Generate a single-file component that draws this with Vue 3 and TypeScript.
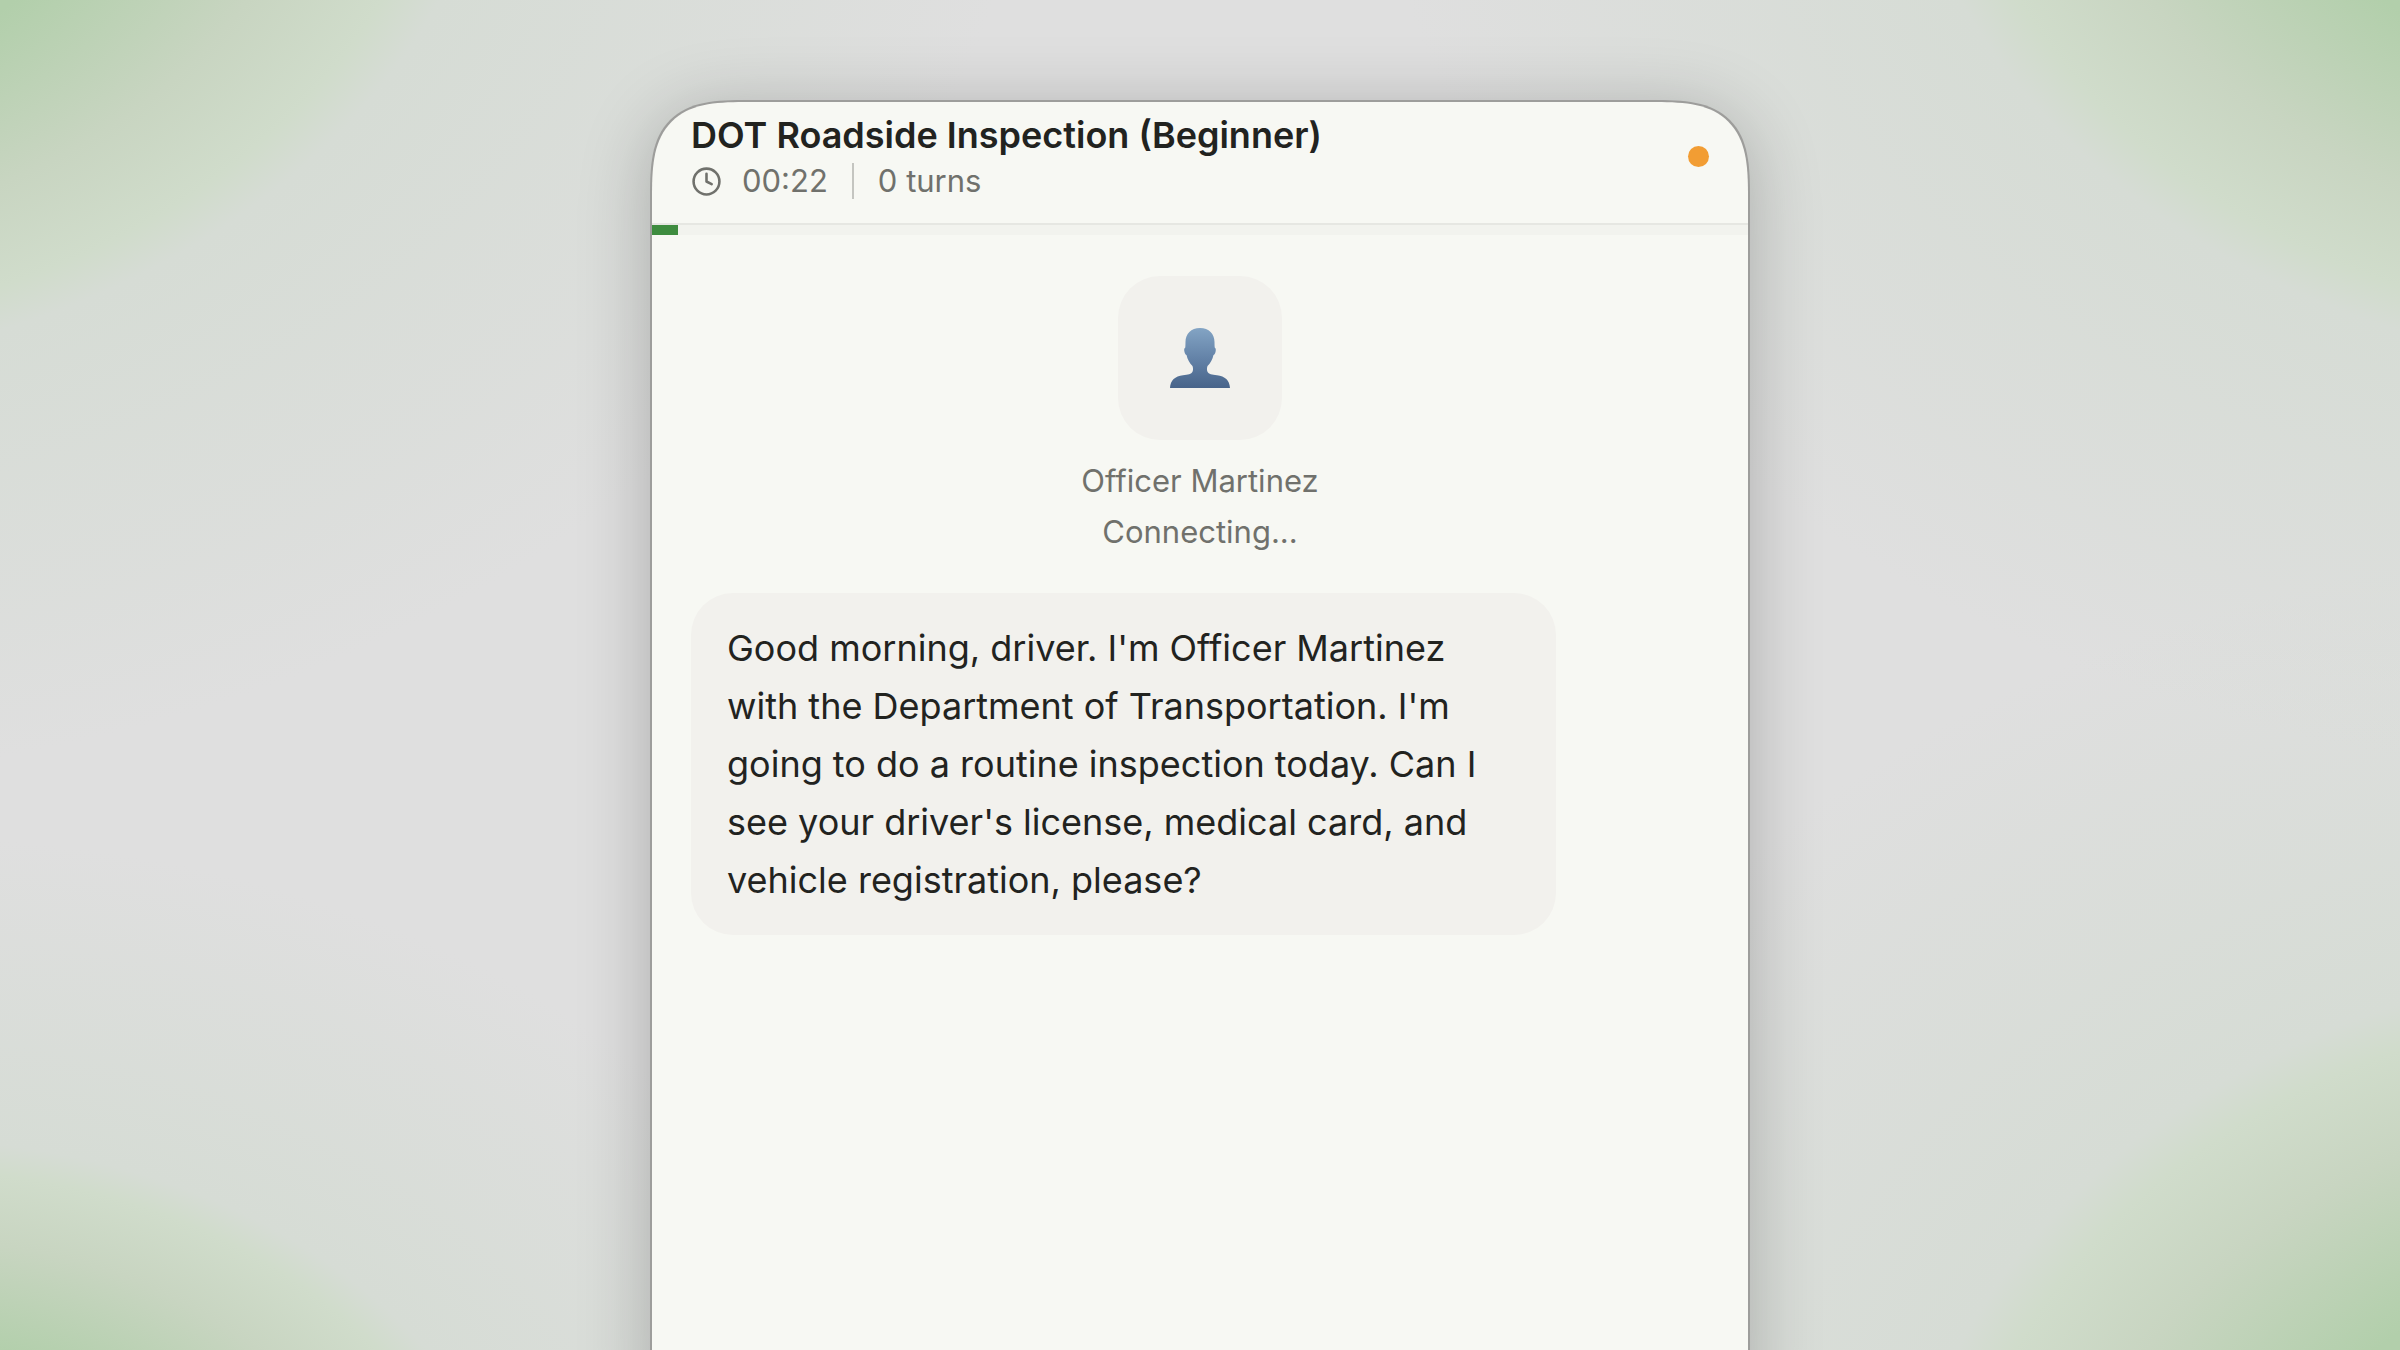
<script setup lang="ts">
import { computed, ref } from 'vue'

interface Message {
  id: number
  text: string
}

const title = 'DOT Roadside Inspection (Beginner)'
const officer = 'Officer Martinez'
const status = 'Connecting...'

const elapsedSeconds = ref(22)
const totalSeconds = 920
const turns = ref(0)

const messages = ref<Message[]>([
  {
    id: 1,
    text: "Good morning, driver. I'm Officer Martinez with the Department of Transportation. I'm going to do a routine inspection today. Can I see your driver's license, medical card, and vehicle registration, please?",
  },
])

const clock = computed(() => {
  const minutes = Math.floor(elapsedSeconds.value / 60)
  const seconds = elapsedSeconds.value % 60
  return `${String(minutes).padStart(2, '0')}:${String(seconds).padStart(2, '0')}`
})

const progress = computed(() => `${(elapsedSeconds.value / totalSeconds) * 100}%`)
</script>

<template>
  <div class="page">
    <main class="panel">
      <header class="header">
        <div class="heading">
          <h1 class="title">{{ title }}</h1>
          <div class="meta">
            <svg class="clock" viewBox="0 0 24 24" aria-hidden="true">
              <circle cx="12" cy="12" r="10" />
              <path d="M12 6v6l4 2" />
            </svg>
            <time class="elapsed">{{ clock }}</time>
            <span class="divider"></span>
            <span>{{ turns }} turns</span>
          </div>
        </div>
        <span class="dot" role="status" aria-label="Connecting"></span>
      </header>

      <div class="track">
        <div class="bar" :style="{ width: progress }"></div>
      </div>

      <section class="conversation">
        <div class="persona">
          <div class="avatar">
            <svg class="bust" viewBox="0 0 60 60" aria-hidden="true">
              <defs>
                <linearGradient id="bust-fill" x1="0" y1="0" x2="0" y2="1">
                  <stop offset="0" stop-color="#83a4c4" />
                  <stop offset="0.5" stop-color="#6483a8" />
                  <stop offset="1" stop-color="#48648a" />
                </linearGradient>
              </defs>
              <path
                fill="url(#bust-fill)"
                d="M30 0C21 0 15.500 6 15.500 14C15.500 16 15.400 18 15.300 19.500C14 20 14 22 14.500 24C15 25.800 15.600 26.800 16.500 27C17.500 31.500 19.500 35 22.500 38C23.200 40 23.200 42 22.600 43.500C21.300 46.500 18 46.600 13 47.200C5 48.200 0.500 52 0 60H60C59.500 52 55 48.200 47 47.200C42 46.600 38.700 46.500 37.400 43.500C36.800 42 36.800 40 37.500 38C40.500 35 42.500 31.500 43.500 27C44.400 26.800 45 25.800 45.500 24C46 22 46 20 44.700 19.500C44.600 18 44.500 16 44.500 14C44.500 6 39 0 30 0Z"
              />
            </svg>
          </div>
          <p class="caption">{{ officer }}</p>
          <p class="caption">{{ status }}</p>
        </div>

        <p v-for="message in messages" :key="message.id" class="bubble">{{ message.text }}</p>
      </section>
    </main>
  </div>
</template>

<style>
body {
  margin: 0;
}
</style>

<style scoped>
.page {
  --glow: #b2cfab 33%, #c8d5c1 47%, #d0dccb 56%, #d6dcd5 60%, rgba(218, 221, 218, 0) 100%;

  box-sizing: border-box;
  height: 100vh;
  overflow: hidden;
  padding-top: 100px;
  color: #22231f;
  font-family: Inter, 'Noto Sans', sans-serif;
  background:
    radial-gradient(ellipse 55% 76% at -12% -18%, var(--glow)),
    radial-gradient(ellipse 55% 76% at 112% -18%, var(--glow)),
    radial-gradient(ellipse 43% 56% at -4% 118%, var(--glow)),
    radial-gradient(ellipse 55% 78% at 112% 118%, var(--glow)),
    #dfdfdf;
}

.panel {
  box-sizing: border-box;
  width: min(1100px, 100%);
  min-height: 100vh;
  margin: 0 auto;
  overflow: hidden;
  border: 2px solid #9d9d9b;
  border-radius: 68px;
  background: #f7f8f3;
  box-shadow: 0 10px 72px rgba(0, 0, 0, 0.23);
}

@supports (corner-shape: superellipse(1.6)) {
  .panel {
    border-radius: 98px;
    corner-shape: superellipse(1.6);
  }
}

.header {
  display: flex;
  align-items: center;
  justify-content: space-between;
  padding: 8px 39px 21px;
  border-bottom: 2px solid #e6e7e2;
}

.title {
  margin: 0;
  font-size: 36px;
  font-weight: 600;
  line-height: 50px;
}

.meta {
  display: flex;
  align-items: center;
  height: 42px;
  color: #70716c;
  font-size: 31px;
  line-height: 42px;
}

.clock {
  width: 31px;
  height: 31px;
  margin-right: 20px;
  fill: none;
  stroke: currentColor;
  stroke-width: 2;
  stroke-linecap: round;
  stroke-linejoin: round;
}

.divider {
  width: 2px;
  height: 36px;
  margin: 0 24px;
  background: #c4c5c0;
}

.dot {
  width: 21px;
  height: 21px;
  border-radius: 50%;
  background: #f29d33;
}

.track {
  height: 10px;
  background: #f2f3ee;
}

.bar {
  height: 100%;
  background: #3e8c3f;
}

.conversation {
  padding: 41px 39px;
}

.persona {
  display: flex;
  flex-direction: column;
  align-items: center;
  margin-bottom: 36px;
}

.avatar {
  display: flex;
  align-items: center;
  justify-content: center;
  width: 164px;
  height: 164px;
  margin-bottom: 15px;
  border-radius: 42px;
  background: #f2f1ed;
}

.bust {
  width: 60px;
  height: 60px;
}

.caption {
  margin: 0;
  color: #70716c;
  font-size: 31px;
  line-height: 51px;
}

.bubble {
  box-sizing: border-box;
  width: fit-content;
  max-width: 85%;
  margin: 0;
  padding: 26px 36px;
  border-radius: 42px;
  background: #f2f1ed;
  font-size: 36px;
  line-height: 58px;
}
</style>
